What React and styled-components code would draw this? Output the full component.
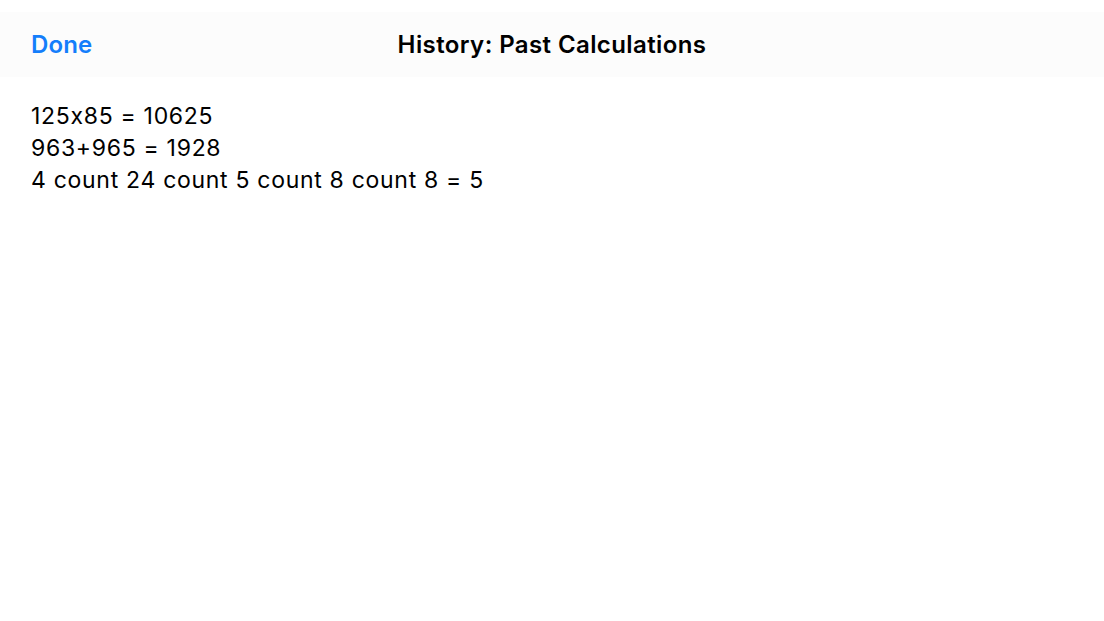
import React from 'react'
import styled, { createGlobalStyle } from 'styled-components'

const GlobalStyle = createGlobalStyle`
  html, body {
    margin: 0;
    padding: 0;
    background: #ffffff;
  }
  body {
    font-family: Inter, "Noto Sans", "Liberation Sans", sans-serif;
    font-feature-settings: "calt" 0;
    color: #000000;
  }
`

const history = ['125x85 = 10625', '963+965 = 1928', '4 count 24 count 5 count 8 count 8 = 5']

function App() {
  return (
    <Page>
      <GlobalStyle />
      <NavBar>
        <DoneButton>Done</DoneButton>
        <Title>History: Past Calculations</Title>
        <Spacer />
      </NavBar>
      <List>
        {history.map(item => (
          <Entry key={item}>{item}</Entry>
        ))}
      </List>
    </Page>
  )
}

const Page = styled.div`
  min-height: 621px;
  padding-top: 12px;
  box-sizing: border-box;
`

const NavBar = styled.header`
  display: grid;
  grid-template-columns: 1fr auto 1fr;
  align-items: center;
  height: 65px;
  padding: 0 31px;
  background: #fcfcfc;
`

const DoneButton = styled.button`
  justify-self: start;
  border: none;
  background: none;
  padding: 0;
  font-family: inherit;
  font-feature-settings: inherit;
  font-size: 24px;
  font-weight: 600;
  letter-spacing: 0.1px;
  color: #147efb;
  cursor: pointer;
`

const Title = styled.h1`
  margin: 0;
  font-size: 24px;
  font-weight: 600;
  letter-spacing: 0.4px;
  color: #000000;
`

const Spacer = styled.span``

const List = styled.ul`
  list-style: none;
  margin: 0;
  padding: 23px 31px;
`

const Entry = styled.li`
  font-size: 23px;
  line-height: 32px;
  letter-spacing: 0.7px;
`

export default App
